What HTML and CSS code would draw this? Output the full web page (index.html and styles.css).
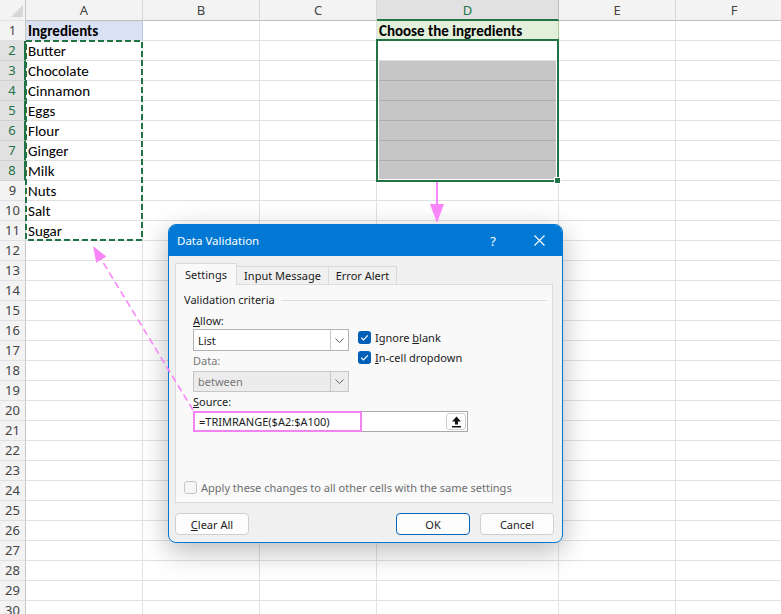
FILE: index.html
```html
<!DOCTYPE html>
<html lang="en">
<head>
    <meta charset="UTF-8">
    <meta name="viewport" content="width=device-width, initial-scale=1.0">
    <title>Data Validation</title>
    <link rel="stylesheet" href="styles.css">
</head>
<body>
    <div class="sheet">
        <div class="row hdr">
            <div class="rh corner"></div>
            <div class="ch">A</div><div class="ch">B</div><div class="ch">C</div><div class="ch on">D</div><div class="ch">E</div><div class="ch">F</div>
        </div>
        <div class="row"><div class="rh">1</div><div class="c blue b">Ingredients</div><div class="c"></div><div class="c"></div><div class="c green b">Choose the ingredients</div><div class="c"></div><div class="c"></div></div>
        <div class="row"><div class="rh on">2</div><div class="c">Butter</div><div class="c"></div><div class="c"></div><div class="c"></div><div class="c"></div><div class="c"></div></div>
        <div class="row"><div class="rh on">3</div><div class="c">Chocolate</div><div class="c"></div><div class="c"></div><div class="c shade"></div><div class="c"></div><div class="c"></div></div>
        <div class="row"><div class="rh on">4</div><div class="c">Cinnamon</div><div class="c"></div><div class="c"></div><div class="c shade"></div><div class="c"></div><div class="c"></div></div>
        <div class="row"><div class="rh on">5</div><div class="c">Eggs</div><div class="c"></div><div class="c"></div><div class="c shade"></div><div class="c"></div><div class="c"></div></div>
        <div class="row"><div class="rh on">6</div><div class="c">Flour</div><div class="c"></div><div class="c"></div><div class="c shade"></div><div class="c"></div><div class="c"></div></div>
        <div class="row"><div class="rh on">7</div><div class="c">Ginger</div><div class="c"></div><div class="c"></div><div class="c shade"></div><div class="c"></div><div class="c"></div></div>
        <div class="row"><div class="rh on">8</div><div class="c">Milk</div><div class="c"></div><div class="c"></div><div class="c shade"></div><div class="c"></div><div class="c"></div></div>
        <div class="row"><div class="rh">9</div><div class="c">Nuts</div><div class="c"></div><div class="c"></div><div class="c"></div><div class="c"></div><div class="c"></div></div>
        <div class="row"><div class="rh">10</div><div class="c">Salt</div><div class="c"></div><div class="c"></div><div class="c"></div><div class="c"></div><div class="c"></div></div>
        <div class="row"><div class="rh">11</div><div class="c">Sugar</div><div class="c"></div><div class="c"></div><div class="c"></div><div class="c"></div><div class="c"></div></div>
        <div class="row"><div class="rh">12</div><div class="c"></div><div class="c"></div><div class="c"></div><div class="c"></div><div class="c"></div><div class="c"></div></div>
        <div class="row"><div class="rh">13</div><div class="c"></div><div class="c"></div><div class="c"></div><div class="c"></div><div class="c"></div><div class="c"></div></div>
        <div class="row"><div class="rh">14</div><div class="c"></div><div class="c"></div><div class="c"></div><div class="c"></div><div class="c"></div><div class="c"></div></div>
        <div class="row"><div class="rh">15</div><div class="c"></div><div class="c"></div><div class="c"></div><div class="c"></div><div class="c"></div><div class="c"></div></div>
        <div class="row"><div class="rh">16</div><div class="c"></div><div class="c"></div><div class="c"></div><div class="c"></div><div class="c"></div><div class="c"></div></div>
        <div class="row"><div class="rh">17</div><div class="c"></div><div class="c"></div><div class="c"></div><div class="c"></div><div class="c"></div><div class="c"></div></div>
        <div class="row"><div class="rh">18</div><div class="c"></div><div class="c"></div><div class="c"></div><div class="c"></div><div class="c"></div><div class="c"></div></div>
        <div class="row"><div class="rh">19</div><div class="c"></div><div class="c"></div><div class="c"></div><div class="c"></div><div class="c"></div><div class="c"></div></div>
        <div class="row"><div class="rh">20</div><div class="c"></div><div class="c"></div><div class="c"></div><div class="c"></div><div class="c"></div><div class="c"></div></div>
        <div class="row"><div class="rh">21</div><div class="c"></div><div class="c"></div><div class="c"></div><div class="c"></div><div class="c"></div><div class="c"></div></div>
        <div class="row"><div class="rh">22</div><div class="c"></div><div class="c"></div><div class="c"></div><div class="c"></div><div class="c"></div><div class="c"></div></div>
        <div class="row"><div class="rh">23</div><div class="c"></div><div class="c"></div><div class="c"></div><div class="c"></div><div class="c"></div><div class="c"></div></div>
        <div class="row"><div class="rh">24</div><div class="c"></div><div class="c"></div><div class="c"></div><div class="c"></div><div class="c"></div><div class="c"></div></div>
        <div class="row"><div class="rh">25</div><div class="c"></div><div class="c"></div><div class="c"></div><div class="c"></div><div class="c"></div><div class="c"></div></div>
        <div class="row"><div class="rh">26</div><div class="c"></div><div class="c"></div><div class="c"></div><div class="c"></div><div class="c"></div><div class="c"></div></div>
        <div class="row"><div class="rh">27</div><div class="c"></div><div class="c"></div><div class="c"></div><div class="c"></div><div class="c"></div><div class="c"></div></div>
        <div class="row"><div class="rh">28</div><div class="c"></div><div class="c"></div><div class="c"></div><div class="c"></div><div class="c"></div><div class="c"></div></div>
        <div class="row"><div class="rh">29</div><div class="c"></div><div class="c"></div><div class="c"></div><div class="c"></div><div class="c"></div><div class="c"></div></div>
        <div class="row"><div class="rh">30</div><div class="c"></div><div class="c"></div><div class="c"></div><div class="c"></div><div class="c"></div><div class="c"></div></div>

        <!-- selected range D2:D8 -->
        <div class="selection"><span class="handle"></span></div>

        <div class="dialog">
            <div class="titlebar">
                <span class="title">Data Validation</span>
                <span class="tb-btn">?</span>
                <span class="tb-btn">
                    <svg width="11" height="11" viewBox="0 0 11 11"><path d="M0.5 0.5 L10.5 10.5 M10.5 0.5 L0.5 10.5" stroke="#fff" stroke-width="1.1"/></svg>
                </span>
            </div>
            <div class="dlg-body">
                <div class="tabs">
                    <div class="tab active">Settings</div>
                    <div class="tab">Input Message</div>
                    <div class="tab">Error Alert</div>
                </div>
                <div class="panel">
                    <div class="group-title"><span>Validation criteria</span><span class="rule"></span></div>
                    <div class="criteria">
                        <div class="crit-left">
                            <div class="lbl"><u>A</u>llow:</div>
                            <div class="select">
                                <span class="value">List</span>
                                <span class="drop"><svg width="9" height="5" viewBox="0 0 9 5"><path d="M0.5 0.5 L4.5 4.5 L8.5 0.5" fill="none" stroke="#606060" stroke-width="1"/></svg></span>
                            </div>
                            <div class="lbl dim">Data:</div>
                            <div class="select disabled">
                                <span class="value">between</span>
                                <span class="drop"><svg width="9" height="5" viewBox="0 0 9 5"><path d="M0.5 0.5 L4.5 4.5 L8.5 0.5" fill="none" stroke="#606060" stroke-width="1"/></svg></span>
                            </div>
                        </div>
                        <div class="crit-right">
                            <div class="check">
                                <span class="box on"><svg width="13" height="13" viewBox="0 0 13 13"><path d="M3.2 6.8 L5.5 9 L9.8 4.3" fill="none" stroke="#fff" stroke-width="1.2"/></svg></span>
                                <span>Ignore <u>b</u>lank</span>
                            </div>
                            <div class="check">
                                <span class="box on"><svg width="13" height="13" viewBox="0 0 13 13"><path d="M3.2 6.8 L5.5 9 L9.8 4.3" fill="none" stroke="#fff" stroke-width="1.2"/></svg></span>
                                <span><u>I</u>n-cell dropdown</span>
                            </div>
                        </div>
                    </div>
                    <div class="lbl src-lbl"><u>S</u>ource:</div>
                    <div class="source">
                        <span class="formula">=TRIMRANGE($A2:$A100)</span>
                        <span class="pick"><svg width="11" height="12" viewBox="0 0 11 12"><path d="M5.5 0.5 L10 5.5 L7 5.5 L7 8.5 L4 8.5 L4 5.5 L1 5.5 Z" fill="#111"/><rect x="1" y="10" width="9" height="1.5" fill="#111"/></svg></span>
                    </div>
                    <div class="check apply">
                        <span class="box"></span>
                        <span>Apply these changes to all other cells with the same settings</span>
                    </div>
                </div>
                <div class="buttons">
                    <button class="btn"><u>C</u>lear All</button>
                    <button class="btn ok">OK</button>
                    <button class="btn">Cancel</button>
                </div>
            </div>
        </div>

        <!-- marching ants and the pink callout arrows -->
        <svg class="overlay" width="781" height="614" viewBox="0 0 781 614">
            <rect x="26" y="41" width="116" height="199" fill="none" stroke="#217346" stroke-width="2" stroke-dasharray="6 3"/>
            <line x1="437" y1="182" x2="437" y2="207" stroke="#f986f9" stroke-width="2"/>
            <polygon points="430,204 444,204 437,223" fill="#f986f9"/>
            <line x1="193" y1="410" x2="101" y2="259" stroke="#f986f9" stroke-width="1.6" stroke-dasharray="7 4"/>
            <polygon points="93,246 106.4,256.6 96.2,262.8" fill="#f986f9"/>
        </svg>
    </div>
</body>
</html>
```

FILE: styles.css
```css
body {
    margin: 0;
    padding: 0;
    background-color: #fff;
}

.sheet {
    position: relative;
    width: 781px;
    height: 614px;
    overflow: hidden;
    font-family: Calibri, Carlito, Lato, sans-serif;
    font-size: 15px;
    color: #000;
}

.row {
    display: grid;
    grid-template-columns: 26px 117px 117px 117px 182px 117px 117px;
    height: 20px;
}

.row.hdr {
    height: 21px;
}

.row > div {
    box-sizing: border-box;
    border-right: 1px solid #e1e1e1;
    border-bottom: 1px solid #e1e1e1;
    overflow: hidden;
    white-space: nowrap;
}

/* row and column headers */
.rh, .ch {
    background-color: #f3f3f3;
    color: #444;
    font-family: "Segoe UI", "Noto Sans", sans-serif;
    text-align: center;
}

.rh {
    font-size: 13px;
    line-height: 19px;
}

.row > .rh {
    border-right-color: #c6c6c6;
}

.ch {
    font-size: 13px;
    line-height: 20px;
}

.row > .ch {
    border-right-color: #d6d6d6;
    border-bottom-color: #bdbdbd;
}

.rh.on, .ch.on {
    background-color: #e1e1e1;
    color: #217346;
}

.row > .ch.on {
    border-bottom: 2px solid #217346;
    border-right-color: #bdbdbd;
}

.row > .rh.on {
    border-right: 2px solid #217346;
    border-bottom-color: #d0d0d0;
}

.corner {
    position: relative;
}

.corner::after {
    content: "";
    position: absolute;
    right: 2px;
    bottom: 3px;
    border-style: solid;
    border-width: 0 0 12px 12px;
    border-color: transparent transparent #d7d7d7 transparent;
}

/* cells */
.c {
    padding-left: 2px;
    line-height: 21px;
}

.b {
    font-weight: bold;
}

.row > .blue {
    background-color: #d9e1f2;
    border-right-color: #b4c6e7;
}

.row > .green {
    background-color: #e2efda;
    border-right-color: #a9d08e;
}

.row > .shade {
    background-color: #c6c6c6;
    border-bottom-color: #adadad;
}

.selection {
    position: absolute;
    left: 376px;
    top: 39px;
    width: 183px;
    height: 143px;
    box-sizing: border-box;
    border: 2px solid #217346;
    box-shadow: inset 0 0 0 1px #fff;
}

.handle {
    position: absolute;
    right: -4px;
    bottom: -4px;
    width: 5px;
    height: 5px;
    background-color: #217346;
    border: 1px solid #fff;
}

.overlay {
    position: absolute;
    left: 0;
    top: 0;
    pointer-events: none;
    z-index: 3;
}

/* dialog */
.dialog {
    position: absolute;
    left: 168px;
    top: 224px;
    width: 395px;
    height: 319px;
    box-sizing: border-box;
    border: 1px solid #0078d4;
    border-radius: 8px;
    background-color: #f0f0f0;
    box-shadow: 0 8px 28px rgba(0, 0, 0, 0.28);
    overflow: hidden;
    z-index: 2;
    font-family: "Segoe UI", "Noto Sans", sans-serif;
    font-size: 11px;
    color: #1b1b1b;
}

.titlebar {
    display: flex;
    align-items: center;
    height: 31px;
    padding-left: 8px;
    background-color: #0078d4;
    color: #fff;
}

.title {
    flex: 1;
    font-size: 11.5px;
}

.tb-btn {
    display: flex;
    align-items: center;
    justify-content: center;
    width: 46px;
    height: 31px;
    font-size: 13px;
}

.dlg-body {
    padding: 7px 0 0 6px;
}

.tabs {
    display: flex;
    align-items: flex-end;
    height: 21px;
}

.tab {
    box-sizing: border-box;
    height: 18px;
    line-height: 17px;
    text-align: center;
    background-color: #f0f0f0;
    border-top: 1px solid #dadada;
    border-right: 1px solid #dadada;
}

.tab:nth-child(1) {
    width: 62px;
}

.tab:nth-child(2) {
    width: 92px;
}

.tab:nth-child(3) {
    width: 68px;
}

.tab.active {
    position: relative;
    z-index: 1;
    height: 22px;
    line-height: 21px;
    margin-bottom: -1px;
    background-color: #f9f9f9;
    border-left: 1px solid #dadada;
}

.panel {
    display: flex;
    flex-direction: column;
    box-sizing: border-box;
    width: 378px;
    height: 219px;
    background-color: #f9f9f9;
    border: 1px solid #dcdcdc;
}

.group-title {
    display: flex;
    align-items: center;
    margin: 7px 5px 0 8px;
    line-height: 16px;
}

.rule {
    flex: 1;
    height: 1px;
    margin-left: 6px;
    background-color: #dcdcdc;
}

.lbl {
    line-height: 16px;
}

.lbl.dim {
    color: #777;
    margin-top: 2px;
}

.criteria {
    display: flex;
    margin: 5px 0 0 17px;
}

.crit-left {
    width: 156px;
}

.crit-right {
    padding: 17px 0 0 9px;
}

.select {
    display: flex;
    align-items: center;
    box-sizing: border-box;
    height: 22px;
    background-color: #fff;
    border: 1px solid #b4b4b4;
}

.select .value {
    flex: 1;
    padding-left: 4px;
}

.select .drop {
    display: flex;
    align-items: center;
    justify-content: center;
    width: 17px;
    height: 100%;
    border-left: 1px solid #c8c8c8;
}

.select.disabled {
    height: 21px;
    margin-top: 2px;
    background-color: #ececec;
    border-color: #c6c6c6;
    color: #777;
}

.check {
    display: flex;
    align-items: center;
    height: 14px;
    margin-bottom: 6px;
}

.box {
    box-sizing: border-box;
    width: 13px;
    height: 13px;
    margin-right: 4px;
    border-radius: 3px;
    border: 1px solid #c4c4c4;
    background-color: #f6f6f6;
}

.box.on {
    border: none;
    background-color: #005fb8;
}

.box svg {
    display: block;
}

.src-lbl {
    margin: 2px 0 0 17px;
}

.source {
    display: flex;
    align-items: center;
    box-sizing: border-box;
    width: 275px;
    height: 21px;
    margin: 1px 0 0 17px;
    background-color: #fff;
    border: 1px solid #a8a8a8;
}

.formula {
    box-sizing: border-box;
    width: 169px;
    height: 21px;
    margin: 0 0 0 -1px;
    padding-left: 4px;
    line-height: 17px;
    border: 2px solid #f383f3;
}

.pick {
    display: flex;
    align-items: center;
    justify-content: center;
    box-sizing: border-box;
    width: 20px;
    height: 17px;
    margin: 0 1px 0 auto;
    border: 1px solid #cfcfcf;
    border-radius: 3px;
    background-color: #fff;
}

.check.apply {
    margin: auto 0 8px 8px;
    color: #6e6e6e;
}

.buttons {
    display: flex;
    width: 379px;
    margin-top: 10px;
}

.btn {
    box-sizing: border-box;
    width: 74px;
    height: 22px;
    padding: 0;
    font-family: inherit;
    font-size: 11px;
    color: #1b1b1b;
    background-color: #fdfdfd;
    border: 1px solid #d0d0d0;
    border-radius: 4px;
}

.btn.ok {
    margin-left: auto;
    margin-right: 10px;
    border-color: #0067c0;
}
```
